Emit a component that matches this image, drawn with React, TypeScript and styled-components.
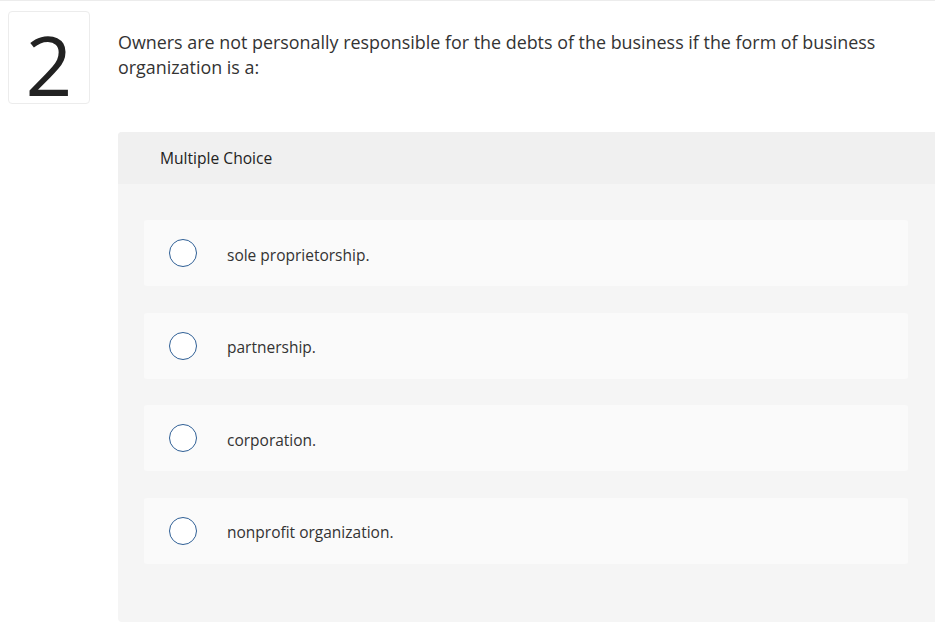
import styled, { createGlobalStyle } from "styled-components";

const GlobalStyle = createGlobalStyle`
  html, body {
    margin: 0;
    padding: 0;
    background: #fff;
  }
  body {
    font-family: "Open Sans", "Lato", sans-serif;
    color: #333;
  }
`;

const Page = styled.div`
  border-top: 1px solid #ececec;
  display: grid;
  grid-template-columns: 82px 1fr;
  column-gap: 28px;
  padding: 10px 0 0 8px;
`;

const NumberBox = styled.div`
  box-sizing: border-box;
  width: 82px;
  height: 93px;
  border: 1px solid #ececec;
  border-radius: 4px;
  display: flex;
  align-items: center;
  justify-content: center;
  padding-top: 12px;
  font-family: "Open Sans", sans-serif;
  font-size: 82px;
  line-height: 1;
  font-weight: 400;
  color: #222;
`;

const Content = styled.div`
  display: flex;
  flex-direction: column;
`;

const Question = styled.p`
  margin: 19px 40px 0 0;
  font-size: 17.9px;
  line-height: 25px;
  color: #333;
`;

const Panel = styled.div`
  margin-top: 52px;
  background: #f5f5f5;
  border-radius: 4px 0 0 4px;
  height: 490px;
  overflow: hidden;
`;

const PanelHeader = styled.div`
  height: 52px;
  background: #f0f0f0;
  display: flex;
  align-items: center;
  padding-left: 42px;
  font-size: 15.6px;
  color: #222;
`;

const Options = styled.div`
  display: flex;
  flex-direction: column;
  gap: 26.5px;
  padding: 36px 27px 0 26px;
`;

const Option = styled.label`
  height: 66px;
  background: #fafafa;
  border-radius: 3px;
  display: flex;
  align-items: center;
  padding-left: 25px;
  gap: 30px;
  font-size: 15.5px;
  color: #333;
`;

const OptionText = styled.span`
  padding-top: 3px;
`;

const Radio = styled.span`
  box-sizing: border-box;
  width: 28px;
  height: 28px;
  border: 1.5px solid #2f5f95;
  border-radius: 50%;
  background: #fff;
  flex-shrink: 0;
`;

const choices = [
  "sole proprietorship.",
  "partnership.",
  "corporation.",
  "nonprofit organization.",
];

export default function App() {
  return (
    <>
      <GlobalStyle />
      <Page>
        <NumberBox>2</NumberBox>
        <Content>
          <Question>
            Owners are not personally responsible for the debts of the business if the form of
            business organization is a:
          </Question>
          <Panel>
            <PanelHeader>Multiple Choice</PanelHeader>
            <Options>
              {choices.map((c) => (
                <Option key={c}>
                  <Radio />
                  <OptionText>{c}</OptionText>
                </Option>
              ))}
            </Options>
          </Panel>
        </Content>
      </Page>
    </>
  );
}
